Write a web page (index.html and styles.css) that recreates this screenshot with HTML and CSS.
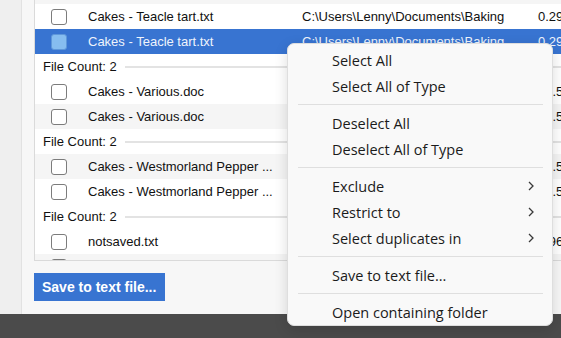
FILE: index.html
```html
<!DOCTYPE html>
<html lang="en">
<head>
    <meta charset="UTF-8">
    <meta name="viewport" content="width=device-width, initial-scale=1.0">
    <title>Duplicate Files</title>
    <link rel="stylesheet" href="styles.css">
</head>
<body>
    <div class="app">
        <div class="workspace">
            <div class="sidebar"></div>
            <div class="main">
                <div class="file-list">
                    <div class="rows">
                        <div class="row alt"></div>
                        <div class="row"><span class="check"></span><span class="name">Cakes - Teacle tart.txt</span><span class="path">C:\Users\Lenny\Documents\Baking</span><span class="size">0.29 KB</span></div>
                        <div class="row selected"><span class="check"></span><span class="name">Cakes - Teacle tart.txt</span><span class="path">C:\Users\Lenny\Documents\Baking</span><span class="size">0.29 KB</span></div>
                        <div class="group"><span>File Count: 2</span><span class="rule"></span></div>
                        <div class="row"><span class="check"></span><span class="name">Cakes - Various.doc</span><span class="path">C:\Users\Lenny\Documents\Baking</span><span class="size">10.54 KB</span></div>
                        <div class="row alt"><span class="check"></span><span class="name">Cakes - Various.doc</span><span class="path">C:\Users\Lenny\Documents\Baking</span><span class="size">10.54 KB</span></div>
                        <div class="group"><span>File Count: 2</span><span class="rule"></span></div>
                        <div class="row alt"><span class="check"></span><span class="name">Cakes - Westmorland Pepper ...</span><span class="path">C:\Users\Lenny\Documents\Baking</span><span class="size">10.52 KB</span></div>
                        <div class="row"><span class="check"></span><span class="name">Cakes - Westmorland Pepper ...</span><span class="path">C:\Users\Lenny\Documents\Baking</span><span class="size">10.52 KB</span></div>
                        <div class="group"><span>File Count: 2</span><span class="rule"></span></div>
                        <div class="row"><span class="check"></span><span class="name">notsaved.txt</span><span class="path">C:\Users\Lenny\Documents</span><span class="size">0.96 KB</span></div>
                        <div class="row alt"><span class="check"></span></div>
                    </div>
                </div>
                <button class="save-btn">Save to text file...</button>
            </div>
        </div>
        <div class="statusbar"></div>

        <!-- right-click menu over the list -->
        <div class="context-menu">
            <div class="menu-item">Select All</div>
            <div class="menu-item">Select All of Type</div>
            <div class="menu-sep"></div>
            <div class="menu-item">Deselect All</div>
            <div class="menu-item">Deselect All of Type</div>
            <div class="menu-sep"></div>
            <div class="menu-item">Exclude <svg class="chevron" viewBox="0 0 6 10"><path d="M1 1l4 4-4 4"/></svg></div>
            <div class="menu-item">Restrict to <svg class="chevron" viewBox="0 0 6 10"><path d="M1 1l4 4-4 4"/></svg></div>
            <div class="menu-item">Select duplicates in <svg class="chevron" viewBox="0 0 6 10"><path d="M1 1l4 4-4 4"/></svg></div>
            <div class="menu-sep"></div>
            <div class="menu-item">Save to text file...</div>
            <div class="menu-sep"></div>
            <div class="menu-item">Open containing folder</div>
        </div>
    </div>
</body>
</html>
```

FILE: styles.css
```css
body {
    margin: 0;
    padding: 0;
    overflow: hidden;
    font-family: "Liberation Sans", Arial, sans-serif;
    font-size: 13px;
    color: #111;
}
.app {
    position: relative;
    width: 561px;
    height: 338px;
    display: flex;
    flex-direction: column;
    overflow: hidden;
}
.workspace {
    flex: 1;
    display: flex;
    min-height: 0;
}
.sidebar {
    width: 21px;
    background-color: #efefef;
    border-right: 1px solid #e2e2e2;
}
.main {
    flex: 1;
    padding-left: 12px;
    background-color: #f7f7f7;
    overflow: hidden;
}
.file-list {
    width: 640px;
    height: 260px;
    overflow: hidden;
    background-color: #ffffff;
    border-left: 1px solid #dadada;
    border-bottom: 1px solid #dadada;
}
.rows {
    margin-top: -21px;
}
.row {
    display: flex;
    align-items: center;
    height: 25px;
    background-color: #ffffff;
    white-space: nowrap;
}
.row.alt {
    background-color: #f5f5f5;
}
.row.selected {
    background-color: #3874d1;
    color: #eef3fc;
}
.check {
    width: 16px;
    height: 16px;
    margin-left: 16px;
    box-sizing: border-box;
    border: 1.5px solid #7c7c7c;
    border-radius: 3px;
    background-color: #ffffff;
}
.row.selected .check {
    background-color: #86bdf0;
    border-color: #5e97da;
}
.name {
    width: 214px;
    margin-left: 21px;
}
.path {
    width: 236px;
}
.group {
    display: flex;
    align-items: center;
    height: 25px;
    padding-left: 8px;
    background-color: #ffffff;
}
.rule {
    flex: 1;
    height: 2px;
    margin-left: 8px;
    background-color: #e3e3e3;
}
.save-btn {
    display: block;
    margin-top: 12px;
    height: 28px;
    padding: 0 9px 0 8px;
    border: none;
    background-color: #3874d1;
    color: #ffffff;
    font-family: "Liberation Sans", Arial, sans-serif;
    font-size: 14px;
    font-weight: bold;
    cursor: pointer;
}
.statusbar {
    height: 24px;
    background-color: #4b4b4b;
}

.context-menu {
    position: absolute;
    left: 287px;
    top: 43px;
    width: 266px;
    box-sizing: border-box;
    padding-top: 3px;
    background-color: #f9f9f9;
    border: 1px solid #dedede;
    border-radius: 7px;
    box-shadow: 0 4px 14px rgba(0, 0, 0, 0.14);
    font-family: "Open Sans", sans-serif;
    font-size: 14.5px;
    color: #1b1b1b;
}
.menu-item {
    display: flex;
    align-items: center;
    justify-content: space-between;
    height: 26px;
    padding: 0 18px 0 44px;
}
.chevron {
    width: 6px;
    height: 10px;
    fill: none;
    stroke: #3a3a3a;
    stroke-width: 1.3;
}
.menu-sep {
    height: 1px;
    margin: 5px 9px 5px 10px;
    background-color: #dfdfdf;
}
```
